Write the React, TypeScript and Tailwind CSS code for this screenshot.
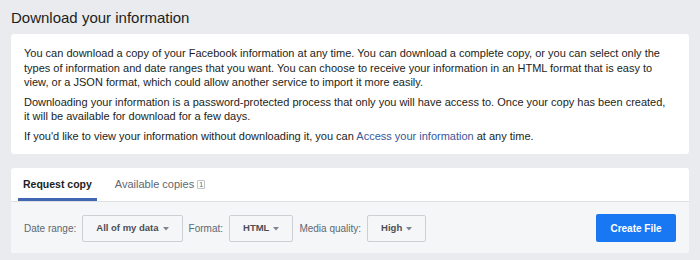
import { useState } from "react";

type Choice = {
  label: string;
  value: string;
};

const choices: Choice[] = [
  { label: "Date range:", value: "All of my data" },
  { label: "Format:", value: "HTML" },
  { label: "Media quality:", value: "High" },
];

function Caret() {
  return (
    <svg width="6" height="4" viewBox="0 0 6 4" className="ml-[4px] mt-[1px]">
      <path d="M0 0h6L3 3.5z" fill="#7f8590" />
    </svg>
  );
}

function Dropdown({ value }: { value: string }) {
  return (
    <button className="flex h-[27px] items-center rounded-[2px] border border-[#ccd0d5] bg-[#f5f6f7] px-[13px] text-[9.5px] font-bold text-[#4b4f56]">
      {value}
      <Caret />
    </button>
  );
}

export default function App() {
  const [tab, setTab] = useState(0);

  return (
    <div
      className="h-[260px] w-[700px] bg-[#e9ebee] px-[11px] pt-[7px] text-[#1c1e21]"
      style={{ fontFamily: '"Liberation Sans", Arial, sans-serif' }}
    >
      {/* HEADING */}
      <h1 className="text-[15px] leading-[22px]">Download your information</h1>

      {/* INFO CARD */}
      <div className="mt-[5px] rounded-[3px] bg-white pb-[11px] pl-[13px] pr-[20px] pt-[12px] text-[11px] leading-[14.5px]">
        <p>
          You can download a copy of your Facebook information at any time. You can download a complete copy, or you can
          select only the types of information and date ranges that you want. You can choose to receive your information
          in an HTML format that is easy to view, or a JSON format, which could allow another service to import it more
          easily.
        </p>
        <p className="mt-[5px]">
          Downloading your information is a password-protected process that only you will have access to. Once your copy
          has been created,
          <br />
          it will be available for download for a few days.
        </p>
        <p className="mt-[5px]">
          If you'd like to view your information without downloading it, you can{" "}
          <a className="text-[#385898]">Access your information</a> at any time.
        </p>
      </div>

      {/* REQUEST CARD */}
      <div className="mt-[14px] overflow-hidden rounded-[3px] bg-white">
        <div className="flex h-[33px] items-stretch gap-[13px] px-[7px]">
          {["Request copy", "Available copies"].map((t, i) => (
            <button
              key={t}
              onClick={() => setTab(i)}
              className={`flex items-center border-b-[3px] px-[5px] pt-[3px] ${
                tab === i
                  ? "border-[#4267b2] text-[10.5px] font-bold text-[#1c1e21]"
                  : "border-transparent text-[11px] text-[#606770]"
              }`}
            >
              {t}
              {i === 1 && (
                <span className="ml-[3px] flex h-[9px] w-[8px] items-center justify-center rounded-[1px] border border-[#bec3c9] text-[7px] leading-none text-[#606770]">
                  1
                </span>
              )}
            </button>
          ))}
        </div>

        <div className="flex items-center border-t border-[#dddfe2] bg-[#f5f6f7] px-[13px] pb-[11px] pt-[12px]">
          {choices.map((c) => (
            <div key={c.label} className="mr-[6px] flex items-center gap-[6px]">
              <span className="text-[10px] text-[#606770]">{c.label}</span>
              <Dropdown value={c.value} />
            </div>
          ))}
          <button className="ml-auto h-[28px] w-[80px] rounded-[2px] bg-[#1877f2] text-[10px] font-bold text-white">
            Create File
          </button>
        </div>
      </div>
    </div>
  );
}
